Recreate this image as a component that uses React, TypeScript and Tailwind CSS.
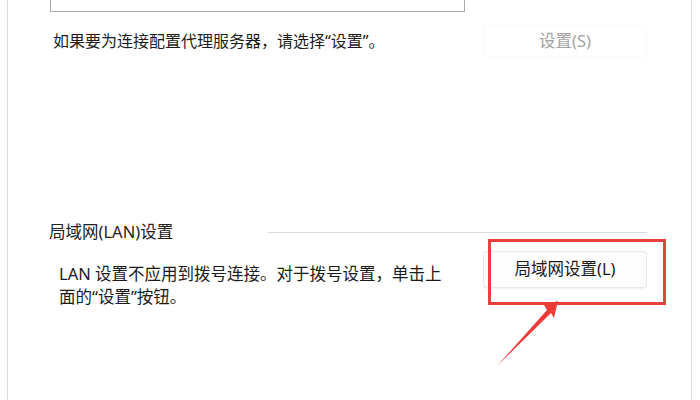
export default function App() {
  return (
    <div className="relative h-[400px] w-[700px] overflow-hidden bg-white font-['Noto_Sans','Noto_Sans_CJK_SC',sans-serif] text-[16px] text-[#1b1b1b]">
      {/* dialog panel */}
      <div className="ml-[7px] h-full w-[685px] border-x border-[#d3dce2] pr-[44px]">
        {/* exception list box, cut off at the top */}
        <div className="ml-[42px] h-[12px] w-[415px] border-x border-b border-[#a9a9a9]" />

        {/* proxy settings row */}
        <div className="mt-[13px] flex h-[32px] items-center justify-between">
          <span className="ml-[45px] leading-[24px]">如果要为连接配置代理服务器，请选择“设置”。</span>
          <button
            disabled
            className="h-[32px] w-[164px] rounded-[4px] border border-[#fafafa] bg-white text-[16.5px] text-[#a3a3a3]"
          >
            设置(S)
          </button>
        </div>

        {/* LAN section header */}
        <div className="mt-[163px] flex h-[24px] items-center justify-between">
          <span className="ml-[41px] text-[16.5px] leading-[24px] text-[#222]">局域网(LAN)设置</span>
          <div className="h-px w-[379px] bg-[#d2dbe0]" />
        </div>

        {/* LAN row */}
        <div className="mt-[4px] flex items-start justify-between">
          <p className="ml-[51px] mt-[14px] text-[16.5px] leading-[23px]">
            LAN 设置不应用到拨号连接。对于拨号设置，单击上
            <br />
            面的“设置”按钮。
          </p>
          <button className="mt-[3px] h-[37px] w-[164px] rounded-[4px] border border-[#e8e8e8] bg-[#fdfdfd] text-[16.5px] shadow-[0_1px_1px_rgba(0,0,0,0.05)]">
            局域网设置(L)
          </button>
        </div>
      </div>

      {/* annotation: red box */}
      <div className="absolute left-[488px] top-[239px] h-[66px] w-[178px] border-[3px] border-[#e8403e]" />

      {/* annotation: arrow */}
      <svg className="absolute left-0 top-0" width="700" height="400" viewBox="0 0 700 400">
        <polygon
          points="497,366 547,310 544,305 558,301 554,318 551,313"
          fill="#ee3b37"
        />
      </svg>
    </div>
  );
}
